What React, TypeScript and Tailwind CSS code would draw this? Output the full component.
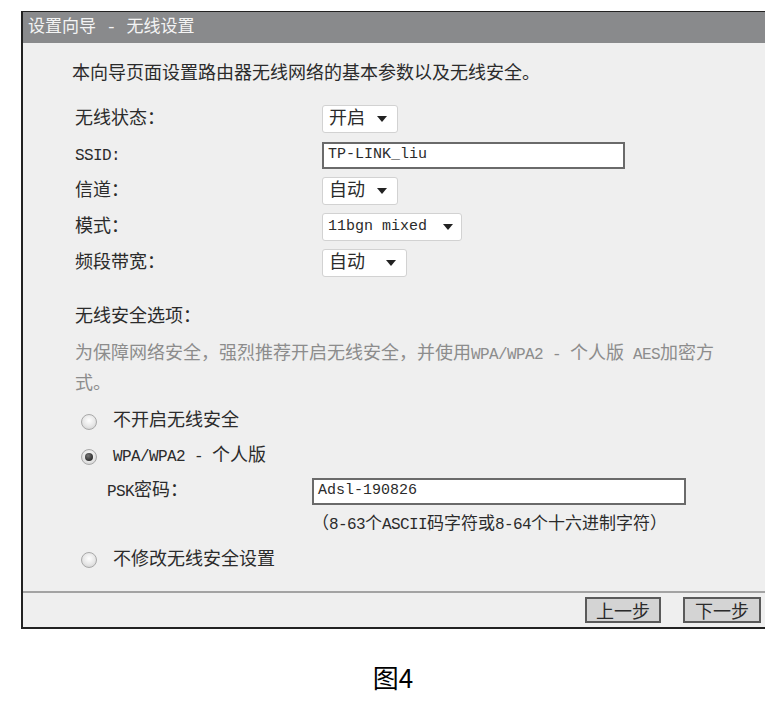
import React from "react";

const L = ({ children }: { children: React.ReactNode }) => (
  <span className="text-[16px] tracking-[-0.6px]">{children}</span>
);

const Tri = () => (
  <svg width="10" height="6" viewBox="0 0 10 6" className="shrink-0">
    <path d="M0 0 H10 L5 6 Z" fill="#222" />
  </svg>
);

const Select = ({ label, w }: { label: string; w: string }) => (
  <div className={`flex items-center justify-between h-[28px] ${w} bg-white border border-[#d2d2d2] rounded-[3px] pl-[6px] pr-[10px]`}>
    <span className="whitespace-pre">{label}</span>
    <Tri />
  </div>
);

const Radio = ({ on }: { on?: boolean }) => (
  <div className="w-[16px] h-[16px] rounded-full border border-[#a9a9a9] bg-[radial-gradient(circle_at_50%_40%,#ffffff_0%,#e6e6e6_55%,#c8c8c8_100%)] flex items-center justify-center shrink-0">
    {on && <div className="w-[8px] h-[8px] rounded-full bg-[radial-gradient(circle_at_40%_35%,#777_0%,#222_80%)]" />}
  </div>
);

export default function App() {
  return (
    <div className="w-[765px] h-[709px] bg-white font-['Liberation_Mono','Noto_Sans_CJK_SC',monospace] text-[18px] text-[#2b2b2b] pt-[11px] pl-[21px]">
      <div className="w-[744px] h-[618px] border-l-2 border-b-2 border-t border-[#222] flex flex-col bg-[#efefef]">
        <div className="h-[31px] bg-[#898a8c] text-[#f4f4f4] flex items-center pl-[5px] text-[17px] whitespace-pre">
          设置向导 - 无线设置
        </div>
        <div className="flex-1 flex flex-col pl-[49px]">
          <div className="mt-[19px] leading-[24px] h-[24px]">本向导页面设置路由器无线网络的基本参数以及无线安全。</div>
          <div className="mt-[15px] pl-[3px] flex flex-col">
            <div className="h-[36px] flex items-center">
              <div className="w-[247px]">无线状态：</div>
              <Select label="开启" w="w-[76px]" />
            </div>
            <div className="h-[36px] flex items-center">
              <div className="w-[247px]"><L>SSID:</L></div>
              <div className="h-[27px] w-[303px] bg-white border-2 border-[#6a6a6a] flex items-center pl-[4px] text-[15px]">TP-LINK_liu</div>
            </div>
            <div className="h-[36px] flex items-center">
              <div className="w-[247px]">信道：</div>
              <Select label="自动" w="w-[76px]" />
            </div>
            <div className="h-[36px] flex items-center">
              <div className="w-[247px]">模式：</div>
              <div className="flex items-center justify-between h-[28px] w-[140px] bg-white border border-[#d2d2d2] rounded-[3px] pl-[5px] pr-[8px] text-[15px]">
                <span>11bgn mixed</span>
                <Tri />
              </div>
            </div>
            <div className="h-[36px] flex items-center">
              <div className="w-[247px]">频段带宽：</div>
              <Select label="自动" w="w-[85px]" />
            </div>
          </div>
          <div className="mt-[23px] pl-[3px] h-[26px] leading-[26px]">无线安全选项：</div>
          <div className="mt-[10px] pl-[3px] leading-[29px] text-[#8c8c8c]">
            为保障网络安全，强烈推荐开启无线安全，并使用<L>WPA/WPA2 - </L>个人版<L> AES</L>加密方
            <br />
            式。
          </div>
          <div className="mt-[5px] pl-[9px] h-[35px] flex items-center">
            <Radio />
            <span className="ml-[16px]">不开启无线安全</span>
          </div>
          <div className="pl-[9px] h-[35px] flex items-center">
            <Radio on />
            <span className="ml-[16px] whitespace-pre"><L>WPA/WPA2 - </L>个人版</span>
          </div>
          <div className="h-[34px] flex items-center pl-[35px]">
            <div className="w-[205px]"><L>PSK</L>密码：</div>
            <div className="h-[27px] w-[374px] bg-white border-2 border-[#6a6a6a] flex items-center pl-[4px] text-[15px]">Adsl-190826</div>
          </div>
          <div className="h-[34px] flex items-center pl-[240px] text-[17px]">（<L>8-63</L>个<L>ASCII</L>码字符或<L>8-64</L>个十六进制字符）</div>
          <div className="pl-[9px] h-[36px] flex items-center">
            <Radio />
            <span className="ml-[16px]">不修改无线安全设置</span>
          </div>
        </div>
        <div className="h-[2px] bg-[#a3a3a3]" />
        <div className="h-[34px] flex items-center justify-end pr-[4px] gap-[22px] font-['Noto_Sans_CJK_SC',sans-serif]">
          <div className="h-[26px] w-[76px] border-2 border-[#5a5a5a] bg-[#d4d4d4] flex items-center justify-center">上一步</div>
          <div className="h-[26px] w-[78px] border-2 border-[#5a5a5a] bg-[#d4d4d4] flex items-center justify-center">下一步</div>
        </div>
      </div>
      <div className="w-[744px] mt-[28px] flex justify-center font-['Noto_Sans_CJK_SC',sans-serif] text-[26px] text-black">
        图4
      </div>
    </div>
  );
}
